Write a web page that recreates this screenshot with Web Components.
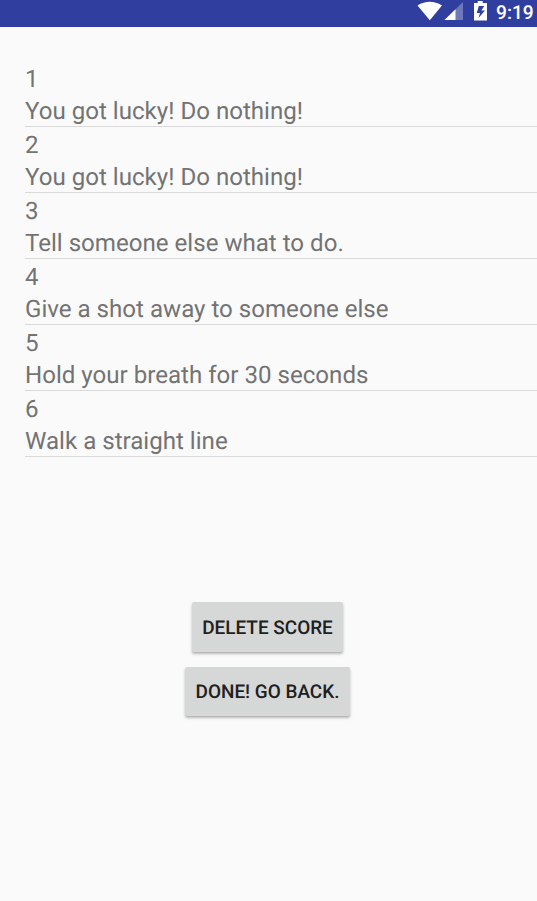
<!DOCTYPE html>
<html lang="en"><head><meta charset="utf-8"><title>Score</title>
<style>html,body{margin:0;height:100%;background:#fafafa}body{font-family:Roboto,sans-serif;overflow:hidden;text-rendering:geometricPrecision}</style></head>
<body><score-screen></score-screen>
<script>
const define=(name,html)=>customElements.define(name,class extends HTMLElement{
  constructor(){super();this.attachShadow({mode:'open'}).innerHTML=html;}
});
define('status-bar',`<style>
:host{display:flex;box-sizing:border-box;height:27px;background:#303f9f;color:#fff;justify-content:flex-end;padding-right:4px}
svg{display:block;width:80px;height:27px;flex:none}
span{font-size:19.2px;line-height:25px;font-weight:500;width:37px;white-space:nowrap}
</style><svg viewBox="416 0 80 27"><path d="M417.500 5.500Q429.800-2 442 5.500L429.800 20.300Z" fill="#fff"/><path d="M463 2V20H444.500Z" fill="#fff" opacity=".3"/><path d="M455.500 9.300V20H444.500Z" fill="#fff"/><path d="M477.700 1h5v2h4.300v17.500h-13V3h3.700zM478.800 6l-2 7h3.200l-1.500 5 6.500-7.500h-3.600l2.800-4.500z" fill="#fff" fill-rule="evenodd"/></svg><span><slot></slot></span>`);
define('score-row',`<style>
:host{display:block;box-sizing:border-box;height:66px;padding-top:1px;border-bottom:1px solid #dadada;color:#737373;font-size:24.1px;white-space:nowrap}
div{height:32px;line-height:34px}
</style><div><slot name="number"></slot></div><div><slot></slot></div>`);
define('action-button',`<style>
:host{display:block}
button{display:block;box-sizing:border-box;width:var(--w);height:var(--h,50px);border:0;border-radius:2px;padding:0;background:#d6d7d7;color:#202020;font:500 18.95px/var(--line,51px) Roboto,sans-serif;text-rendering:geometricPrecision;white-space:nowrap;box-shadow:0 1px 0 rgba(0,0,0,.06),0 2px 3px rgba(0,0,0,.26)}
</style><button><slot></slot></button>`);
define('score-screen',`<style>
:host{display:flex;flex-direction:column;height:100vh}
main{padding:34px 0 0 25px}
footer{display:flex;flex-direction:column;align-items:center;gap:15px;padding:145px 2px 0 0}
</style><status-bar>9:19</status-bar><main>
<score-row><span slot="number">1</span>You got lucky! Do nothing!</score-row>
<score-row><span slot="number">2</span>You got lucky! Do nothing!</score-row>
<score-row><span slot="number">3</span>Tell someone else what to do.</score-row>
<score-row><span slot="number">4</span>Give a shot away to someone else</score-row>
<score-row><span slot="number">5</span>Hold your breath for 30 seconds</score-row>
<score-row><span slot="number">6</span>Walk a straight line</score-row>
</main><footer><action-button style="--w:151px">DELETE SCORE</action-button><action-button style="--w:165px;--h:49px;--line:49px">DONE! GO BACK.</action-button></footer>`);
</script></body></html>
